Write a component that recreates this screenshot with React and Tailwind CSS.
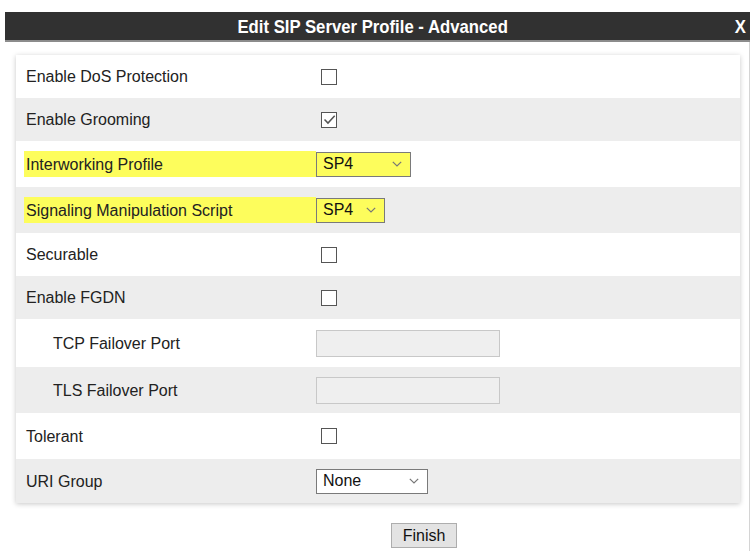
import React from "react";

function Checkbox({ checked }) {
  return (
    <div className="w-[16px] h-[16px] border-[1.5px] border-[#555] bg-white ml-[5px] flex items-center justify-center">
      {checked && (
        <svg width="13" height="13" viewBox="0 0 12 12">
          <path d="M1.4 6 L4.6 9.3 L10.8 2.6" fill="none" stroke="#555" strokeWidth="1.4" />
        </svg>
      )}
    </div>
  );
}

function Chevron() {
  return (
    <svg width="10" height="6" viewBox="0 0 10 6" className="shrink-0">
      <path d="M0.8 0.8 L5 5 L9.2 0.8" fill="none" stroke="#777" strokeWidth="1.2" />
    </svg>
  );
}

function Select({ value, width, yellow }) {
  return (
    <div
      className={`h-[25px] border border-[#7a7a7a] flex items-center justify-between pl-[6px] pr-[8px] text-[16px] text-[#111] ${yellow ? "bg-[#fdfd5c]" : "bg-white"}`}
      style={{ width }}
    >
      <span>{value}</span>
      <Chevron />
    </div>
  );
}

function TextInput() {
  return <div className="w-[184px] h-[27px] border border-[#c8c8c8] bg-[#efefef]" />;
}

function Row({ label, h, gray, indent, highlight, children }) {
  return (
    <div className={`flex items-center ${gray ? "bg-[#ededed]" : "bg-white"}`} style={{ height: h }}>
      <div className="w-[300px] shrink-0 flex items-center">
        {highlight ? (
          <div className="ml-[8px] w-[292px] h-[26px] bg-[#fdfd5c] flex items-center pl-[2px] pt-[1px] text-[16px] text-[#222]">
            {label}
          </div>
        ) : (
          <div className={`text-[16px] text-[#222] pt-[1px] ${indent ? "pl-[37px]" : "pl-[10px]"}`}>{label}</div>
        )}
      </div>
      <div className="flex items-center">{children}</div>
    </div>
  );
}

export default function App() {
  return (
    <div className="w-[755px] h-[551px] bg-white overflow-hidden font-['Liberation_Sans',Arial,sans-serif]">
      <div className="pt-[12px] pl-[5px]">
        <div className="w-[745px] h-[30px] bg-[#313131] border-b-2 border-[#8c8c8c] flex items-center justify-center relative">
          <div className="inline-block scale-x-[0.88] text-white font-bold text-[19px] leading-none mr-[10px] mt-[1px]">
            Edit SIP Server Profile - Advanced
          </div>
          <div className="absolute right-[3px] top-0 h-full flex items-center">
            <span className="inline-block scale-x-[0.88] text-white font-bold text-[19px] leading-none mt-[1px]">X</span>
          </div>
        </div>
        <div className="w-[745px] h-[509px] border-r border-[#d4d4d4] pt-[13px] pl-[11px]">
          <div className="w-[724px] shadow-[0_1px_5px_rgba(0,0,0,0.22)]">
            <Row label="Enable DoS Protection" h={43}>
              <Checkbox />
            </Row>
            <Row label="Enable Grooming" h={43} gray>
              <Checkbox checked />
            </Row>
            <Row label="Interworking Profile" h={46} highlight>
              <Select value="SP4" width={95} yellow />
            </Row>
            <Row label="Signaling Manipulation Script" h={46} gray highlight>
              <Select value="SP4" width={69} yellow />
            </Row>
            <Row label="Securable" h={43}>
              <Checkbox />
            </Row>
            <Row label="Enable FGDN" h={43} gray>
              <Checkbox />
            </Row>
            <Row label="TCP Failover Port" h={48} indent>
              <TextInput />
            </Row>
            <Row label="TLS Failover Port" h={46} gray indent>
              <TextInput />
            </Row>
            <Row label="Tolerant" h={46}>
              <Checkbox />
            </Row>
            <Row label="URI Group" h={44} gray>
              <Select value="None" width={112} />
            </Row>
          </div>
          <div className="pt-[20px] pl-[375px]">
            <button className="w-[66px] h-[25px] bg-[#e3e3e3] border border-[#adadad] text-[16px] text-[#111] flex items-center justify-center">
              Finish
            </button>
          </div>
        </div>
      </div>
    </div>
  );
}
